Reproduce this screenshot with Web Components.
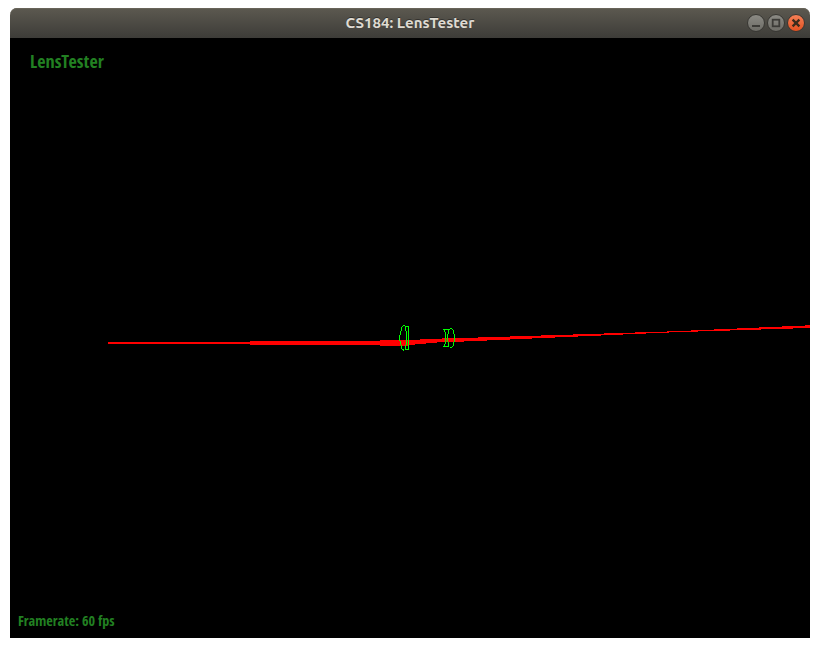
<!DOCTYPE html>
<html lang="en"><head><meta charset="utf-8"><title>CS184: LensTester</title>
<style>body{margin:0;background:#fff}</style></head><body>
<app-window heading="CS184: LensTester"><lens-view></lens-view></app-window>
<script>
class WindowButton extends HTMLElement{
  connectedCallback(){
    const kind=this.getAttribute('kind');
    const marks={
      min:'<path d="M5 12h8" stroke="#3c3b37" stroke-width="2"/>',
      max:'<rect x="5.7" y="5.7" width="6.6" height="6.6" fill="none" stroke="#3c3b37" stroke-width="1.8"/>',
      close:'<path d="M5.6 5.6l6.8 6.8M12.4 5.6l-6.8 6.8" stroke="#3b2c1c" stroke-width="2.3"/>'
    };
    const c=kind==='close'?['#f58158','#e2501f']:['#8c8b85','#6c6b65'];
    this.attachShadow({mode:'open'}).innerHTML=`<style>:host{display:block;width:18px;height:18px}svg{display:block}</style>
    <svg width="18" height="18" viewBox="0 0 18 18"><defs><linearGradient id="g" x2="0" y2="1"><stop stop-color="${c[0]}"/><stop offset="1" stop-color="${c[1]}"/></linearGradient></defs>
    <circle cx="9" cy="9" r="8.5" fill="url(#g)" stroke="#373632" stroke-width="1"/>${marks[kind]}</svg>`;
  }
}
customElements.define('window-button',WindowButton);
class AppWindow extends HTMLElement{
  connectedCallback(){
    this.attachShadow({mode:'open'}).innerHTML=`<style>
    :host{display:flex;flex-direction:column;box-sizing:border-box;width:820px;height:648px;padding:8px 10px 10px}
    header{flex:none;display:grid;grid-template-columns:1fr auto 1fr;align-items:center;height:30px;box-sizing:border-box;border-radius:7px 7px 0 0;background:linear-gradient(#5c5950,#3d3c38);box-shadow:inset 0 1px #686459}
    h1{grid-column:2;margin:0;font:700 15.05px/20px Ubuntu,"Noto Sans",sans-serif;color:#dfdbd2;text-shadow:0 -1px #33322e;white-space:nowrap}
    nav{display:flex;justify-content:flex-end;gap:2px;padding-right:5px}
    </style><header><h1></h1><nav><window-button kind="min"></window-button><window-button kind="max"></window-button><window-button kind="close"></window-button></nav></header><slot></slot>`;
    this.shadowRoot.querySelector('h1').textContent=this.getAttribute('heading');
  }
}
customElements.define('app-window',AppWindow);
class LensView extends HTMLElement{
  connectedCallback(){
    // Beam edges as [end x, y] steps, left to right from x = 108
    const top=[[250,342],[380,341],[420,340],[442,339],[478,338],[510,337],[541,336],[573,335],[604,334],[635,333],[667,332],[691,331],[714,330],[737,329],[759,328],[782,327],[805,326],[810,325]];
    const bottom=[[250,344],[380,345],[409,346],[415,345],[426,344],[437,343],[464,342],[487,341],[510,340],[532,339],[555,338],[578,337],[601,336],[623,335],[646,334],[669,333],[698,332],[730,331],[761,330],[793,329],[810,328]];
    const edge=a=>a.flatMap(([x,y],i)=>[[i?a[i-1][0]:108,y],[x,y]]);
    const beam=[...edge(top),...edge(bottom).reverse()].map(p=>p.join()).join(' ');
    // Lens outlines as one-pixel runs: x, y, width, height
    const lenses=[
      [403,325,2,1],[402,326,1,1],[401,327,1,4],[400,331,1,4],[399,335,1,6],[400,341,1,4],[401,345,1,4],[402,349,2,1],[403,350,1,1],
      [405,326,4,1],[405,327,1,4],[406,331,1,14],[405,345,1,5],[408,326,1,24],[405,349,4,1],
      [443,329,6,1],[444,330,1,2],[445,332,1,12],[444,344,1,2],[443,346,6,1],
      [448,330,1,4],[447,334,1,8],[448,342,1,4],[450,328,2,1],[449,329,1,1],[452,329,1,1],[453,330,1,4],[454,334,1,8],[453,342,1,4],[452,346,1,1],[450,347,2,1]
    ].map(([x,y,w,h])=>`<rect x="${x}" y="${y}" width="${w}" height="${h}"/>`).join('');
    this.attachShadow({mode:'open'}).innerHTML=`<style>
    :host{display:grid;grid-template-rows:1fr auto;flex:1;background:#000;color:#228022;font-family:"Open Sans Condensed","Open Sans",sans-serif;font-weight:700;font-stretch:75%}
    svg{grid-area:1/1/3/2;display:block}
    .title{grid-area:1/1;padding:11px 20px;font-size:18px;line-height:24px;white-space:nowrap}
    .rate{grid-area:2/1;padding:0 8px 7px;font-size:14.2px;line-height:20px;white-space:nowrap;word-spacing:-.6px}
    </style><svg width="800" height="600" viewBox="10 38 800 600" shape-rendering="crispEdges"><polygon fill="#f00" points="${beam}"/><g fill="#0f0">${lenses}</g></svg>
    <div class="title">LensTester</div><div class="rate">Framerate: 60 fps</div>`;
  }
}
customElements.define('lens-view',LensView);
</script></body></html>
